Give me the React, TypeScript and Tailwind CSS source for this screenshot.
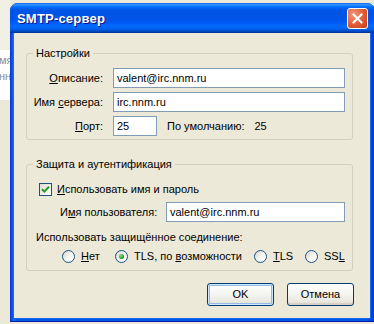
import React from 'react';

const Radio = ({ checked }: { checked?: boolean }) => (
  <span className="w-[13px] h-[13px] shrink-0 rounded-full border border-[#1c5180] bg-gradient-to-br from-[#d4d4cd] via-[#f4f4f0] to-white flex items-center justify-center">
    {checked && <span className="w-[5px] h-[5px] rounded-full bg-[radial-gradient(circle_at_35%_35%,#8fe08f,#21a121_60%,#108010)]" />}
  </span>
);

const Checkbox = () => (
  <span className="w-[13px] h-[13px] shrink-0 border border-[#1c5180] bg-gradient-to-br from-[#dcdcd7] to-white flex items-center justify-center">
    <svg width="11" height="11" viewBox="0 0 11 11">
      <path d="M2 5.2 L4.3 7.6 L9 2.8" fill="none" stroke="#21a121" strokeWidth="2" />
    </svg>
  </span>
);

const Field = ({ value, className = '' }: { value: string; className?: string }) => (
  <div className={`h-[20px] border border-[#7f9db9] bg-white px-[3px] flex items-center ${className}`}>{value}</div>
);

const XpButton = ({ label, isDefault }: { label: string; isDefault?: boolean }) => (
  <button
    className={`w-[67px] h-[23px] rounded-[3px] border border-[#003c74] bg-gradient-to-b from-white via-[#f4f4f0] to-[#e3e2d8] flex items-center justify-center ${isDefault ? 'shadow-[inset_0_0_0_1px_#cee7ff,inset_0_0_0_2px_#98b8ea]' : 'shadow-[inset_0_-2px_0_#d6d0c5]'}`}
  >
    {label}
  </button>
);

export default function App() {
  return (
    <div className="w-[374px] h-[324px] overflow-hidden flex bg-[#ece9d8] text-[11px] leading-[13px] text-black font-['Liberation_Sans',Arial,sans-serif]">
      <div className="w-[10px] shrink-0 flex flex-col">
        <div className="h-[50px] bg-[#f1efe6]" />
        <div className="h-[50px] bg-white text-[#8c8c8c] overflow-hidden flex flex-col gap-[3px] pt-[4px]">
          <span className="-ml-[1px]">мя</span>
          <span className="-ml-[1px]">нн</span>
        </div>
      </div>

      <div className="w-[365px] h-[319px] mt-[3px] shrink-0 flex flex-col rounded-t-[8px] overflow-hidden bg-[#0831d9]">
        <div className="h-[30px] shrink-0 flex items-center justify-between pl-[7px] pr-[7px] pt-[1px] bg-[linear-gradient(180deg,#0058ee_0%,#3593ff_4%,#288eff_7%,#127dff_10%,#036ffc_13%,#0262ee_17%,#0057e5_23%,#0054e3_30%,#0055eb_56%,#005bf5_66%,#026afe_76%,#0062ef_86%,#0052d6_92%,#0040ab_96%,#003092_100%)]">
          <span className="text-white font-bold text-[13px] tracking-[0.2px] [text-shadow:1px_1px_0_#0a1883] font-['Liberation_Sans',Arial,sans-serif]">
            SMTP-сервер
          </span>
          <div className="w-[21px] h-[21px] rounded-[3px] border border-white bg-[radial-gradient(circle_at_30%_30%,#f09a7e,#e05a32_55%,#c2401b)] flex items-center justify-center">
            <svg width="11" height="11" viewBox="0 0 11 11">
              <path d="M1.5 1.5 L9.5 9.5 M9.5 1.5 L1.5 9.5" stroke="white" strokeWidth="2" strokeLinecap="square" />
            </svg>
          </div>
        </div>

        <div className="flex-1 flex pl-[4px] pr-[5px] pb-[3px] bg-[linear-gradient(90deg,#0831d9_0%,#166aee_1%,#0055ea_2%,#0055ea_98%,#0831d9_100%)] border-b border-[#001ea0]">
          <div className="flex-1 bg-[#ece9d8] flex flex-col shadow-[-1px_0_0_#166aee,1px_0_0_#166aee,0_1px_0_#166aee]">
            <fieldset className="w-[327px] ml-[12px] mt-[14px] border border-[#d0d0bf] rounded-[3px] pt-[8px] pb-[3px] pr-[7px]">
              <legend className="ml-[6px] px-[3px] leading-[13px]">Настройки</legend>
              <div className="grid grid-cols-[76px_1fr] gap-x-[10px] gap-y-[4px] items-center">
                <span className="text-right">
                  <span className="underline">О</span>писание:
                </span>
                <Field value="valent@irc.nnm.ru" />
                <span className="text-right">
                  Имя <span className="underline">с</span>ервера:
                </span>
                <Field value="irc.nnm.ru" />
                <span className="text-right">
                  <span className="underline">П</span>орт:
                </span>
                <div className="flex items-center gap-[10px]">
                  <Field value="25" className="w-[44px]" />
                  <span>По умолчанию:</span>
                  <span>25</span>
                </div>
              </div>
            </fieldset>

            <fieldset className="w-[327px] ml-[12px] mt-[18px] border border-[#d0d0bf] rounded-[3px] pt-[12px] pb-[7px] pr-[7px]">
              <legend className="ml-[6px] px-[3px] leading-[13px]">Защита и аутентификация</legend>
              <div className="flex items-center gap-[5px] pl-[12px] h-[13px]">
                <Checkbox />
                <span>
                  <span className="underline">И</span>спользовать имя и пароль
                </span>
              </div>
              <div className="flex items-center mt-[6px] pl-[33px]">
                <span className="w-[106px]">
                  И<span className="underline">м</span>я пользователя:
                </span>
                <Field value="valent@irc.nnm.ru" className="flex-1" />
              </div>
              <div className="mt-[9px] pl-[9px]">Использовать защищённое соединение:</div>
              <div className="flex items-center mt-[6px] pl-[35px] h-[13px]">
                <div className="w-[53px] flex items-center gap-[6px]">
                  <Radio />
                  <span>
                    <span className="underline">Н</span>ет
                  </span>
                </div>
                <div className="w-[139px] flex items-center gap-[6px]">
                  <Radio checked />
                  <span>
                    TLS, по <span className="underline">в</span>озможности
                  </span>
                </div>
                <div className="w-[51px] flex items-center gap-[6px]">
                  <Radio />
                  <span>
                    <span className="underline">T</span>LS
                  </span>
                </div>
                <div className="flex items-center gap-[6px]">
                  <Radio />
                  <span>
                    SS<span className="underline">L</span>
                  </span>
                </div>
              </div>
            </fieldset>

            <div className="flex justify-end gap-[13px] pr-[16px] mt-[12px]">
              <XpButton label="OK" isDefault />
              <XpButton label="Отмена" />
            </div>
          </div>
        </div>
      </div>
    </div>
  );
}
